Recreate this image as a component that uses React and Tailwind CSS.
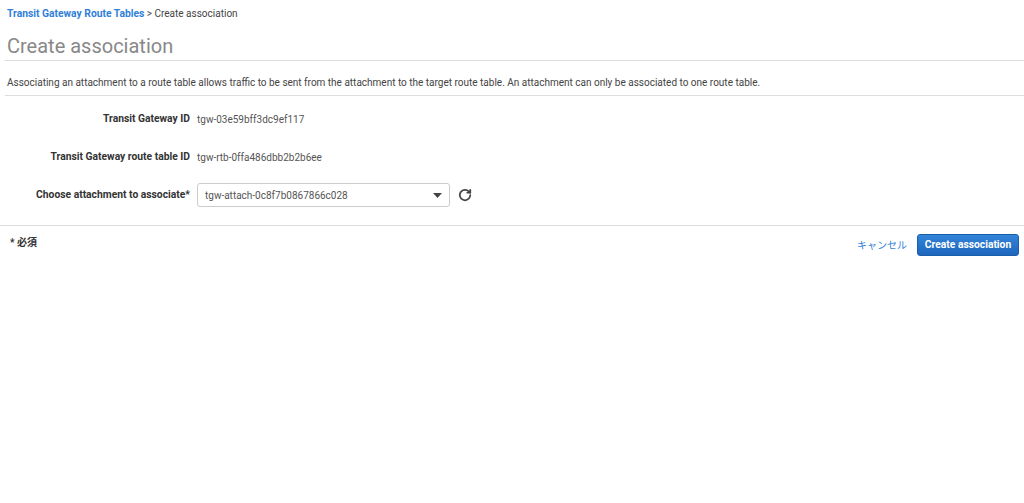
import { RotateCw } from 'lucide-react';

function Row({ label, children }) {
  return (
    <div className="flex items-center h-[24px]">
      <div className="w-[197px] pr-[7px] text-right font-bold text-[10.3px] text-[#333]">{label}</div>
      <div className="flex items-center">{children}</div>
    </div>
  );
}

export default function App() {
  return (
    <div className="w-[1024px] h-[503px] bg-white text-[10px] text-[#444] font-['Roboto','Noto_Sans_CJK_JP',sans-serif]">
      <div className="pl-[7px] pt-[7px] h-[21px] leading-[14px]">
        <span className="font-bold text-[10.3px] text-[#2f7fd9]">Transit Gateway Route Tables</span>
        <span className="text-[#444]"> &gt; Create association</span>
      </div>

      <div className="ml-[5px] mt-[15px] border-b border-[#ddd] h-[25px]">
        <h1 className="pl-[2px] text-[20px] leading-[20px] text-[#888] font-normal">Create association</h1>
      </div>

      <div className="ml-[5px] border-b border-[#ddd] h-[35px] pt-[15px] pl-[2px] leading-[14px]">
        Associating an attachment to a route table allows traffic to be sent from the attachment to the target route table. An attachment can only be associated to one route table.
      </div>

      <div className="pt-[11px] flex flex-col gap-[14px]">
        <Row label="Transit Gateway ID">
          <span className="text-[#555]">tgw-03e59bff3dc9ef117</span>
        </Row>
        <Row label="Transit Gateway route table ID">
          <span className="text-[#555]">tgw-rtb-0ffa486dbb2b2b6ee</span>
        </Row>
        <Row label="Choose attachment to associate*">
          <div className="w-[253px] h-[24px] border border-[#ccc] rounded-[3px] flex items-center justify-between pl-[7px] pr-[7px] text-[#555]">
            <span>tgw-attach-0c8f7b0867866c028</span>
            <svg width="9" height="5" viewBox="0 0 9 5"><path d="M0 0h9L4.5 5z" fill="#444" /></svg>
          </div>
          <RotateCw className="ml-[8px] w-[14px] h-[14px] text-[#444]" strokeWidth={3} />
        </Row>
      </div>

      <div className="mt-[18px] border-t border-[#ddd] flex items-start justify-between pl-[10px] pr-[5px] pt-[8px]">
        <span className="mt-[1px] font-bold text-[#333]">* 必須</span>
        <div className="flex items-center gap-[10px]">
          <span className="text-[#2f7fd9]">キャンセル</span>
          <button className="h-[22px] w-[102px] rounded-[3px] border border-[#1a5fae] bg-gradient-to-b from-[#3384d8] to-[#1d66bd] text-white font-bold text-[10.3px]">
            Create association
          </button>
        </div>
      </div>
    </div>
  );
}
